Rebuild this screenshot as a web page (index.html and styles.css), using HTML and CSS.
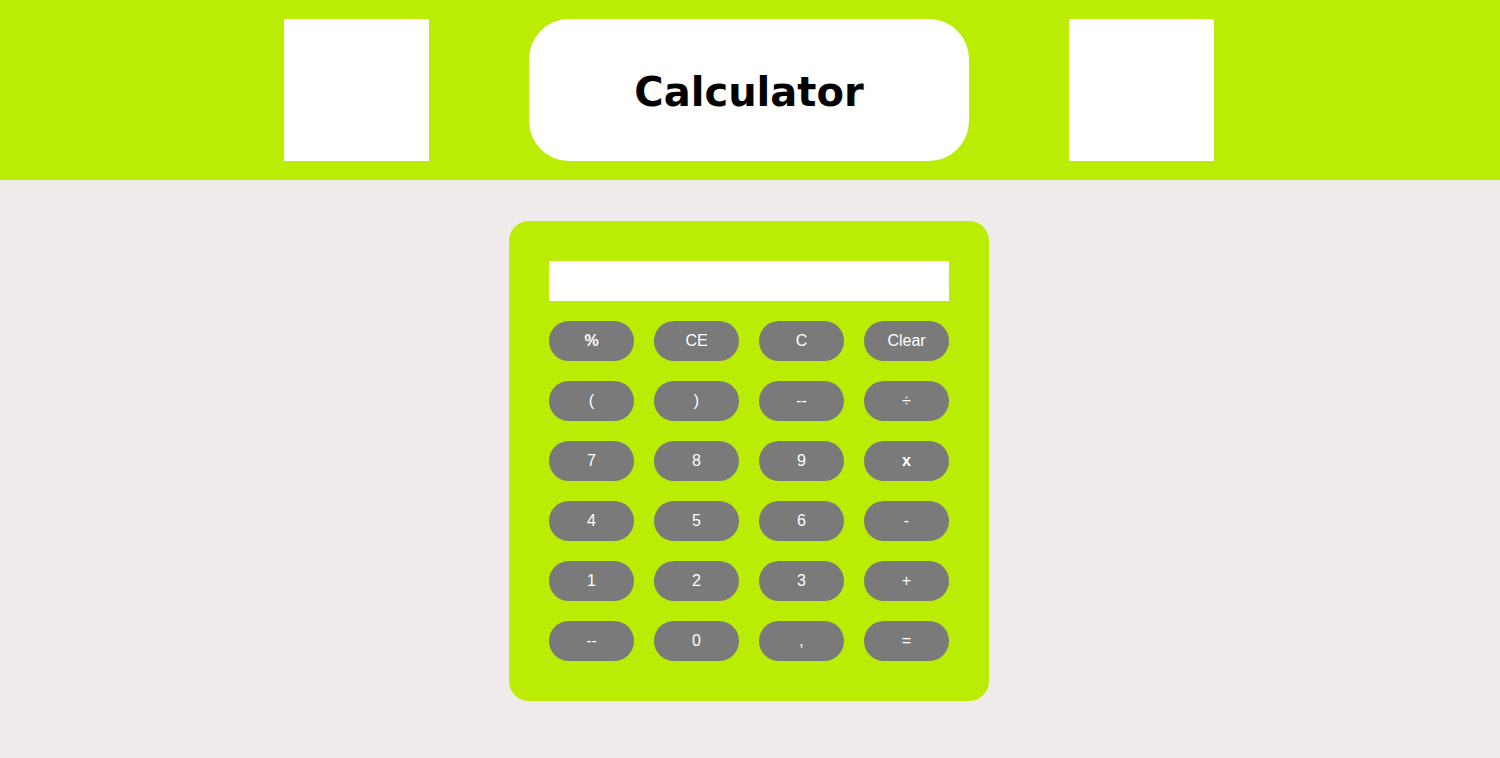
FILE: index.html
```html
<!DOCTYPE html>
<html>
<head>
<meta charset="utf-8">
<link rel="stylesheet" href="styles.css">
</head>
<body>
<header class="header">
  <div class="square"></div>
  <div class="title-box"><h1 class="title">Calculator</h1></div>
  <div class="square"></div>
</header>
<main class="main">
  <div class="calc">
    <div class="display"></div>
    <div class="keys">
      <button class="key key-bold">%</button>
      <button class="key">CE</button>
      <button class="key">C</button>
      <button class="key">Clear</button>
      <button class="key">(</button>
      <button class="key">)</button>
      <button class="key">--</button>
      <button class="key">÷</button>
      <button class="key">7</button>
      <button class="key">8</button>
      <button class="key">9</button>
      <button class="key key-bold">x</button>
      <button class="key">4</button>
      <button class="key">5</button>
      <button class="key">6</button>
      <button class="key">-</button>
      <button class="key">1</button>
      <button class="key">2</button>
      <button class="key">3</button>
      <button class="key">+</button>
      <button class="key">--</button>
      <button class="key">0</button>
      <button class="key">,</button>
      <button class="key">=</button>
    </div>
  </div>
</main>
</body>
</html>
```
FILE: styles.css
```css
html, body {
  margin: 0;
  padding: 0;
}
body {
  background: #efebea;
  font-family: "Liberation Sans", Arial, sans-serif;
}
.header {
  background: #bbec04;
  height: 180px;
  box-sizing: border-box;
  padding-top: 19px;
  padding-right: 2px;
  display: flex;
  justify-content: center;
  gap: 100px;
}
.square {
  width: 145px;
  height: 142px;
  background: #ffffff;
}
.title-box {
  width: 440px;
  height: 142px;
  box-sizing: border-box;
  padding-top: 3px;
  background: #ffffff;
  border-radius: 40px;
  display: flex;
  align-items: center;
  justify-content: center;
}
.title {
  margin: 0;
  font-family: "DejaVu Sans", sans-serif;
  font-weight: bold;
  font-size: 40px;
  color: #000;
}
.main {
  display: flex;
  justify-content: center;
  padding-top: 41px;
  padding-right: 2px;
}
.calc {
  width: 480px;
  box-sizing: border-box;
  padding: 40px;
  background: #bbec04;
  border-radius: 20px;
}
.display {
  height: 40px;
  background: #ffffff;
  margin-bottom: 20px;
}
.keys {
  display: grid;
  grid-template-columns: repeat(4, 85px);
  column-gap: 20px;
  row-gap: 20px;
}
.key {
  height: 40px;
  border: none;
  border-radius: 20px;
  background: #7a7a7a;
  color: #ffffff;
  font-family: "Liberation Sans", Arial, sans-serif;
  font-size: 16px;
  padding: 0;
}
.key-bold {
  font-weight: bold;
}
```
